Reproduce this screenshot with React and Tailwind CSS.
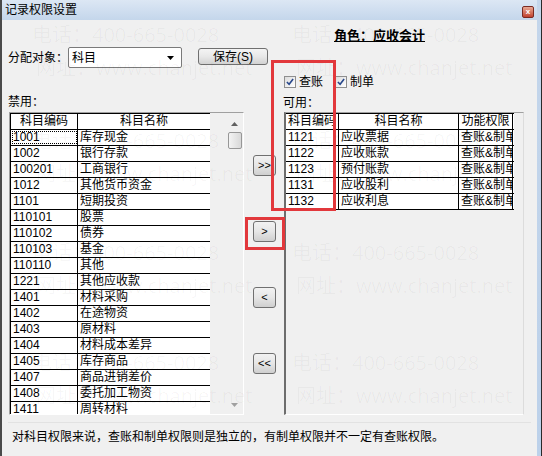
import React from "react";

const leftRows = [
  ["1001", "库存现金"],
  ["1002", "银行存款"],
  ["100201", "工商银行"],
  ["1012", "其他货币资金"],
  ["1101", "短期投资"],
  ["110101", "股票"],
  ["110102", "债券"],
  ["110103", "基金"],
  ["110110", "其他"],
  ["1221", "其他应收款"],
  ["1401", "材料采购"],
  ["1402", "在途物资"],
  ["1403", "原材料"],
  ["1404", "材料成本差异"],
  ["1405", "库存商品"],
  ["1407", "商品进销差价"],
  ["1408", "委托加工物资"],
  ["1411", "周转材料"],
];

const rightRows = [
  ["1121", "应收票据"],
  ["1122", "应收账款"],
  ["1123", "预付账款"],
  ["1131", "应收股利"],
  ["1132", "应收利息"],
];

const watermarkSpots = [
  [30, 18],
  [290, 18],
  [30, 124],
  [290, 124],
  [30, 236],
  [290, 236],
  [30, 346],
  [290, 346],
];

function CheckBox({ label }) {
  return (
    <label className="flex items-center gap-[3px]">
      <span className="flex h-[12px] w-[12px] items-center justify-center border border-[#8f8f8f] bg-gradient-to-br from-[#dcdcdc] to-[#ffffff]">
        <svg width="8" height="8" viewBox="0 0 9 9">
          <path d="M1 4.5 L3.5 7 L8 1.2" fill="none" stroke="#27478b" strokeWidth="1.8" />
        </svg>
      </span>
      <span>{label}</span>
    </label>
  );
}

function MoveButton({ children }) {
  return (
    <button className="flex h-[21px] w-[23px] items-center justify-center rounded-[3px] border border-[#707070] bg-gradient-to-b from-[#f2f2f2] via-[#e6e6e6] to-[#cfcfcf] text-[11px] leading-none text-black">
      {children}
    </button>
  );
}

function GridRow({ cells, widths, header, focus }) {
  return (
    <div className="flex h-[16px] border-b border-black">
      {cells.map((text, i) => (
        <div
          key={i}
          style={{ width: widths[i] }}
          className={`h-full shrink-0 overflow-hidden whitespace-nowrap border-r border-black px-[2px] leading-[15px] ${
            header ? "text-center" : ""
          } ${focus && i === 0 ? "outline outline-1 -outline-offset-2 outline-dotted outline-black" : ""}`}
        >
          {text}
        </div>
      ))}
    </div>
  );
}

export default function App() {
  return (
    <div
      className="relative h-[456px] w-[542px] overflow-hidden border-l-2 border-r border-l-[#4a4a4a] border-r-[#2a2a2a] bg-[#f0f0f0] text-[12px] text-black"
      style={{ fontFamily: '"Liberation Sans", "Noto Sans CJK SC", sans-serif' }}
    >
      <div className="flex h-full">
        <div className="flex min-w-0 flex-1 flex-col">
          {/* title bar */}
          <div className="flex h-[20px] items-center justify-between bg-gradient-to-b from-[#dce7f4] to-[#c4d6eb] pl-[3px] pr-[3px]">
            <span className="text-[12px]">记录权限设置</span>
            <span className="mt-[4px] flex h-[12px] w-[12px] items-center justify-center rounded-[2px] border border-[#7a2a22] bg-gradient-to-b from-[#e8a894] to-[#c0412f] text-[8px] font-bold leading-none text-white">
              x
            </span>
          </div>

          <div className="flex flex-1 flex-col px-[6px]">
            {/* role */}
            <div className="h-[27px] pl-[326px] pt-[7px]">
              <span className="text-[13px] font-bold leading-[15px] underline">角色：应收会计</span>
            </div>

            {/* target + save */}
            <div className="flex h-[21px] items-start">
              <span className="mt-[4px] w-[60px] whitespace-nowrap leading-[14px]">分配对象：</span>
              <div className="flex h-[21px] w-[114px] items-center justify-between rounded-[2px] border border-[#7a7a7a] bg-white pl-[3px] pr-[7px]">
                <span>科目</span>
                <svg width="7" height="4" viewBox="0 0 7 4">
                  <path d="M0 0 H7 L3.5 4 Z" fill="#000" />
                </svg>
              </div>
              <button className="ml-[16px] mt-[1px] flex h-[17px] w-[70px] items-center justify-center rounded-[3px] border border-[#707070] bg-gradient-to-b from-[#f4f4f4] via-[#e8e8e8] to-[#d2d2d2] leading-none">
                保存(S)
              </button>
            </div>

            {/* permission checkboxes */}
            <div className="flex h-[24px] gap-[12px] pl-[276px] pt-[3px]">
              <CheckBox label="查账" />
              <CheckBox label="制单" />
            </div>

            {/* list captions */}
            <div className="flex h-[20px] items-start">
              <span className="w-[275px] pt-[3px] leading-[14px]">禁用：</span>
              <span className="pt-[4px] leading-[14px]">可用：</span>
            </div>

            {/* lists */}
            <div className="flex h-[303px]">
              <div className="ml-[1px] flex h-full w-[235px] border border-b-white border-l-[#a0a0a0] border-r-white border-t-[#a0a0a0]">
                <div className="h-full w-[201px] overflow-hidden border-l border-black bg-white">
                  <div className="border-t border-black">
                    <GridRow cells={["科目编码", "科目名称"]} widths={[67, 133]} header />
                  </div>
                  {leftRows.map((r, i) => (
                    <GridRow key={r[0]} cells={r} widths={[67, 133]} focus={i === 0} />
                  ))}
                </div>
                <div className="w-[16px]" />
                <div className="flex w-[17px] flex-col items-center">
                  <svg className="mt-[9px]" width="7" height="4" viewBox="0 0 7 4">
                    <path d="M0 4 L3.5 0 L7 4 Z" fill="#606060" />
                  </svg>
                  <div className="mt-[6px] h-[17px] w-[14px] rounded-[2px] border border-[#979797] bg-gradient-to-r from-[#f3f3f3] to-[#d8d8d8]" />
                  <div className="flex-1" />
                  <svg className="mb-[7px]" width="7" height="4" viewBox="0 0 7 4">
                    <path d="M0 0 H7 L3.5 4 Z" fill="#a0a0a0" />
                  </svg>
                </div>
              </div>

              <div className="flex w-[40px] flex-col items-start gap-[45px] pl-[9px] pt-[43px]">
                <MoveButton>&gt;&gt;</MoveButton>
                <MoveButton>&gt;</MoveButton>
                <MoveButton>&lt;</MoveButton>
                <MoveButton>&lt;&lt;</MoveButton>
              </div>

              <div className="h-full w-[240px] border-b border-l-2 border-r border-t border-b-white border-l-[#6d6d6d] border-r-[#dcdcdc] border-t-[#a0a0a0]">
                <div className="w-[228px] bg-white">
                  <div className="border-t border-black">
                    <GridRow cells={["科目编码", "科目名称", "功能权限"]} widths={[53, 120, 54]} header />
                  </div>
                  {rightRows.map((r) => (
                    <GridRow key={r[0]} cells={[r[0], r[1], "查账&制单"]} widths={[53, 120, 54]} />
                  ))}
                </div>
              </div>
            </div>

            {/* note */}
            <div className="mt-[7px] border-t border-[#e2e2e2] pl-[4px] pt-[6px] leading-[16px]">
              对科目权限来说，查账和制单权限则是独立的，有制单权限并不一定有查账权限。
            </div>
          </div>
        </div>

        {/* right window frame */}
        <div className="w-[4px] bg-gradient-to-b from-[#c4d6eb] to-[#bcd1ea]" />
      </div>

      {/* watermark */}
      <div className="pointer-events-none absolute inset-0" style={{ fontFamily: '"Open Sans", "Noto Sans CJK SC", sans-serif' }}>
        {watermarkSpots.map(([x, y], i) => (
          <div key={i} className="absolute text-[20px] leading-[33px] text-black/[0.035]" style={{ left: x, top: y }}>
            <div>电话：400-665-0028</div>
            <div className="pl-[4px]">网址：www.chanjet.net</div>
          </div>
        ))}
      </div>

      {/* highlight boxes */}
      <div className="pointer-events-none absolute left-[269px] top-[60px] h-[151px] w-[65px] border-[3px] border-[#e2383c]" />
      <div className="pointer-events-none absolute left-[243px] top-[217px] h-[33px] w-[40px] border-[3px] border-[#e2383c]" />
    </div>
  );
}
